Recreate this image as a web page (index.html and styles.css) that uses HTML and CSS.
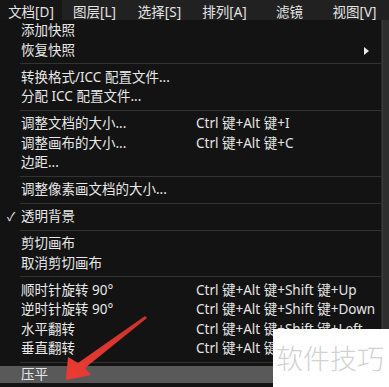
FILE: index.html
```html
<!DOCTYPE html>
<html>
<head>
    <meta charset="UTF-8">
    <title>文档菜单</title>
    <link rel="stylesheet" href="styles.css">
</head>
<body>
    <div class="app">
        <div class="menubar">
            <span class="tab active">文档[D]</span>
            <span class="tab">图层[L]</span>
            <span class="tab">选择[S]</span>
            <span class="tab">排列[A]</span>
            <span class="tab">滤镜</span>
            <span class="tab">视图[V]</span>
        </div>

        <div class="workspace">
            <div class="menu">
                <div class="item"><span class="label">添加快照</span></div>
                <div class="item"><span class="label">恢复快照</span><span class="sub"></span></div>
                <div class="sep"></div>
                <div class="item"><span class="label">转换格式/ICC 配置文件...</span></div>
                <div class="item"><span class="label">分配 ICC 配置文件...</span></div>
                <div class="sep"></div>
                <div class="item"><span class="label">调整文档的大小...</span><span class="key">Ctrl 键+Alt 键+I</span></div>
                <div class="item"><span class="label">调整画布的大小...</span><span class="key">Ctrl 键+Alt 键+C</span></div>
                <div class="item"><span class="label">边距...</span></div>
                <div class="sep"></div>
                <div class="item"><span class="label">调整像素画文档的大小...</span></div>
                <div class="sep"></div>
                <div class="item checked"><span class="label">透明背景</span></div>
                <div class="sep"></div>
                <div class="item"><span class="label">剪切画布</span></div>
                <div class="item"><span class="label">取消剪切画布</span></div>
                <div class="sep"></div>
                <div class="item"><span class="label">顺时针旋转 90°</span><span class="key">Ctrl 键+Alt 键+Shift 键+Up</span></div>
                <div class="item"><span class="label">逆时针旋转 90°</span><span class="key">Ctrl 键+Alt 键+Shift 键+Down</span></div>
                <div class="item"><span class="label">水平翻转</span><span class="key">Ctrl 键+Alt 键+Shift 键+Left</span></div>
                <div class="item"><span class="label">垂直翻转</span><span class="key">Ctrl 键+Alt 键+Shift 键+Right</span></div>
                <div class="sep"></div>
                <div class="item hover"><span class="label">压平</span></div>
            </div>
            <div class="scroll"></div>
        </div>

        <!-- red annotation arrow drawn over the menu -->
        <svg class="arrow" width="100" height="80" viewBox="0 0 100 80">
            <defs>
                <linearGradient id="red" x1="1" y1="0" x2="0" y2="1">
                    <stop offset="0" stop-color="#c8332c"/>
                    <stop offset="1" stop-color="#ee3b33"/>
                </linearGradient>
            </defs>
            <path d="M85 2 L87 4 L25 54 L31 61 L6 66 L8 43 L18 49 Z" fill="url(#red)"/>
        </svg>

        <div class="watermark">软件技巧</div>
    </div>
</body>
</html>
```

FILE: styles.css
```css
body {
    margin: 0;
    background-color: #0c0c0c;
    font-family: "Noto Sans", "Noto Sans CJK SC", sans-serif;
    font-size: 13.5px;
    color: #e8e8e8;
}
.app {
    position: relative;
    width: 389px;
    height: 387px;
    overflow: hidden;
}
.menubar {
    display: flex;
    height: 20px;
    background-color: #212121;
}
.tab {
    display: flex;
    align-items: center;
    padding: 1px 0 0 0;
    width: 65px;
    justify-content: center;
    color: #e4e4e4;
}
.tab.active {
    width: 62px;
    background-color: #161616;
}
.workspace {
    display: flex;
    height: 367px;
}
.menu {
    width: 381px;
    padding-top: 1px;
    background-color: #131313;
    border-right: 1px solid #2a2a2a;
}
.item {
    display: flex;
    align-items: center;
    position: relative;
    height: 19.5px;
    padding-left: 21px;
    line-height: 1;
}
.label {
    width: 175px;
}
.key {
    color: #e4e4e4;
}
.sub {
    position: absolute;
    right: 12px;
    top: 6px;
    border-left: 5px solid #e8e8e8;
    border-top: 4px solid transparent;
    border-bottom: 4px solid transparent;
}
.checked::before {
    content: "✓";
    position: absolute;
    left: 7px;
    font-size: 12px;
}
.hover {
    background-color: #595959;
    height: 17px;
    margin-top: 1px;
}
.sep {
    height: 1px;
    margin: 3px 0 3.5px 20px;
    background-color: #333333;
}
.scroll {
    flex: 1;
    background-color: #2e2e2e;
    border-left: 1px solid #3a3a3a;
}
.arrow {
    position: absolute;
    left: 60px;
    top: 314px;
}
.watermark {
    position: absolute;
    left: 273px;
    top: 329px;
    width: 116px;
    height: 58px;
    background-color: #ffffff;
    color: #d2d2d2;
    font-family: "Noto Sans CJK SC", sans-serif;
    font-weight: 300;
    font-size: 27px;
    line-height: 58px;
    padding-left: 3px;
    box-sizing: border-box;
    white-space: nowrap;
}
```
